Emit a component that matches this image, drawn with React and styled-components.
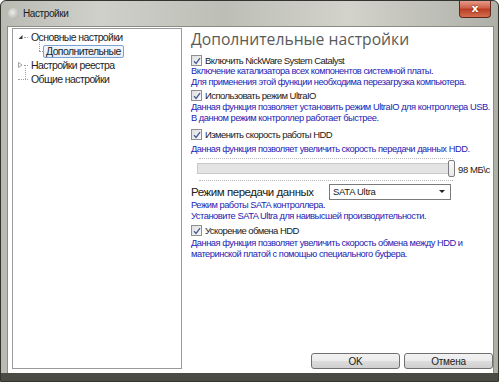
import styled, { createGlobalStyle } from "styled-components";

const GlobalStyle = createGlobalStyle`
  html, body {
    margin: 0;
    padding: 0;
    background: #fff;
  }
  #root {
    width: 500px;
    height: 383px;
  }
`;

const Window = styled.div`
  width: 499px;
  height: 382px;
  display: flex;
  flex-direction: column;
  box-sizing: border-box;
  border: 1px solid #34342f;
  border-radius: 6px 6px 0 0;
  background: linear-gradient(90deg, #b9bbb3 0%, #cfd0ca 20%, #bdbfb6 45%, #d3d2cb 70%, #aeb0a8 100%);
  overflow: hidden;
  font-family: "Liberation Sans", Arial, sans-serif;
`;

const TitleBar = styled.div`
  height: 25px;
  flex: none;
  display: flex;
  align-items: center;
  padding: 0 6px 0 7px;
  position: relative;
`;

const TitleIcon = styled.div`
  width: 11px;
  height: 11px;
  border-radius: 50%;
  background: radial-gradient(circle at 40% 40%, #ecece8, #a3a49e);
  margin-right: 4px;
`;

const Title = styled.span`
  font-size: 10px;
  letter-spacing: -0.4px;
  color: #1c1c1c;
`;

const CloseButton = styled.div`
  position: absolute;
  right: 7px;
  top: -1px;
  width: 30px;
  height: 17px;
  border: 1px solid #5e2a20;
  border-top: none;
  border-radius: 0 0 4px 4px;
  background: linear-gradient(#e8a493 0%, #d0634c 45%, #b93e23 55%, #d56e4e 100%);
  display: flex;
  align-items: center;
  justify-content: center;
  color: #fff;
  font: bold 11px "DejaVu Sans", sans-serif;
  text-shadow: 0 0 2px #5a1a0a;
`;

const Frame = styled.div`
  flex: 1;
  display: flex;
  padding: 0 4px 0 6px;
  min-height: 0;
  border-bottom: 8px solid #4a4b45;
`;

const Client = styled.div`
  flex: 1;
  background: #fff;
  border: 1px solid #8b8c86;
  border-bottom: none;
  display: grid;
  grid-template-columns: 170px 1fr;
  gap: 8px;
  padding: 1px 0 4px 4px;
`;

const Tree = styled.div`
  border: 1px solid #9a9a9a;
  padding: 1px 0 0 5px;
  font-size: 10.5px;
  letter-spacing: -0.6px;
  color: #1e1e1e;
`;

const TreeRow = styled.div`
  display: flex;
  align-items: center;
  height: 14px;
  padding-left: ${(p) => p.$level * 21}px;
  position: relative;
  white-space: nowrap;
`;

const Expander = styled.span`
  width: 6px;
  display: inline-flex;
  align-items: center;
`;

const Dots = styled.span`
  width: ${(p) => p.$w}px;
  border-top: 1px dotted #a0a0a0;
`;

const VDots = styled.span`
  position: absolute;
  left: ${(p) => p.$left}px;
  top: ${(p) => p.$top}px;
  height: ${(p) => p.$h}px;
  border-left: 1px dotted #a0a0a0;
`;

const TreeLabel = styled.span`
  padding: 0 2px;
  border: 1px solid ${(p) => (p.$selected ? "#7da2ce" : "transparent")};
  border-radius: 2px;
  background: ${(p) => (p.$selected ? "linear-gradient(#f2f7fd, #e4eefa)" : "none")};
  line-height: 11px;
`;

const Panel = styled.div`
  display: flex;
  flex-direction: column;
  padding: 0 0 0 1px;
  min-width: 0;
  white-space: nowrap;
`;

const Heading = styled.div`
  font-family: "Open Sans", "Liberation Sans", sans-serif;
  font-size: 15.7px;
  color: #5a5a5a;
  height: 27px;
  line-height: 22px;
`;

const Section = styled.div`
  margin-bottom: ${(p) => p.$gap || 0}px;
`;

const CheckRow = styled.label`
  display: flex;
  align-items: center;
  height: 11px;
  font-size: 9.5px;
  letter-spacing: -0.55px;
  color: #202020;
  margin-bottom: ${(p) => p.$gap || 0}px;
`;

const Box = styled.span`
  width: 9px;
  height: 9px;
  border: 1px solid #8f8f8f;
  background: linear-gradient(135deg, #dedede, #fafafa);
  margin-right: 3px;
  display: inline-flex;
  align-items: center;
  justify-content: center;
`;

const Note = styled.div`
  font-size: 9.3px;
  letter-spacing: -0.47px;
  line-height: 11px;
  color: #2323b4;
`;

const SliderWrap = styled.div`
  display: flex;
  align-items: center;
  padding: 0 0 0 6px;
  height: 28px;
`;

const SliderTrack = styled.div`
  position: relative;
  width: 258px;
  height: 23px;
  &::before,
  &::after {
    content: "";
    position: absolute;
    left: 2px;
    right: 2px;
    border-top: 1px dotted #b8b8b8;
  }
  &::before { top: 0; }
  &::after { bottom: 0; }
`;

const Rail = styled.div`
  position: absolute;
  left: 0;
  right: 2px;
  top: 5px;
  height: 9px;
  border: 1px solid #c9c9c9;
  background: #e4e4e4;
`;

const Thumb = styled.div`
  position: absolute;
  right: 0;
  top: 2px;
  width: 5px;
  height: 15px;
  border: 1px solid #7c7c7c;
  border-radius: 2px;
  background: linear-gradient(#fdfdfd, #e6e6e6);
`;

const SliderValue = styled.span`
  margin-left: 3px;
  font-size: 9.5px;
  letter-spacing: -0.4px;
  color: #202020;
`;

const ModeRow = styled.div`
  display: flex;
  align-items: center;
  height: 17px;
`;

const ModeLabel = styled.span`
  width: 138px;
  font-size: 11.5px;
  letter-spacing: -0.45px;
  color: #202020;
`;

const Select = styled.div`
  width: 112px;
  height: 14px;
  border: 1px solid #7a7a7a;
  display: flex;
  align-items: center;
  justify-content: space-between;
  padding: 0 5px 0 3px;
  font-size: 9.5px;
  letter-spacing: -0.3px;
  color: #202020;
  background: #fff;
`;

const Caret = styled.span`
  width: 0;
  height: 0;
  border-left: 3px solid transparent;
  border-right: 3px solid transparent;
  border-top: 3px solid #222;
`;

const Spacer = styled.div`
  flex: 1;
`;

const Buttons = styled.div`
  display: flex;
  justify-content: flex-end;
  gap: 4px;
`;

const Button = styled.div`
  width: 87px;
  height: 14px;
  border: 1px solid #707070;
  border-radius: 3px;
  background: linear-gradient(#f2f2f2 0%, #ebebeb 50%, #dddddd 51%, #cfcfcf 100%);
  display: flex;
  align-items: center;
  justify-content: center;
  font-size: 10px;
  letter-spacing: -0.2px;
  color: #202020;
`;

const Check = () => (
  <Box>
    <svg width="8" height="8" viewBox="0 0 8 8">
      <path d="M1 4.2 L3.1 6.4 L7 1.2" fill="none" stroke="#4a5f97" strokeWidth="1.4" />
    </svg>
  </Box>
);

const Triangle = ({ open }) => (
  <svg width="5" height="6" viewBox="0 0 5 6">
    {open ? (
      <path d="M4.5 1 L4.5 5 L0.5 5 Z" fill="#3a3a3a" />
    ) : (
      <path d="M0.5 0.5 L4 3 L0.5 5.5 Z" fill="#fff" stroke="#8a8a8a" strokeWidth="0.8" />
    )}
  </svg>
);

const Option = ({ label, lines, gap, noteGap }) => (
  <Section $gap={gap}>
    <CheckRow $gap={noteGap}>
      <Check />
      {label}
    </CheckRow>
    {lines.map((l) => (
      <Note key={l}>{l}</Note>
    ))}
  </Section>
);

export default function App() {
  return (
    <>
      <GlobalStyle />
      <Window>
        <TitleBar>
          <TitleIcon />
          <Title>Настройки</Title>
          <CloseButton>x</CloseButton>
        </TitleBar>
        <Frame>
          <Client>
            <Tree>
              <TreeRow $level={0}>
                <Expander>
                  <Triangle open />
                </Expander>
                <Dots $w={4} />
                <TreeLabel>Основные настройки</TreeLabel>
              </TreeRow>
              <TreeRow $level={1}>
                <VDots $left={21} $top={-4} $h={11} />
                <Dots $w={4} />
                <TreeLabel $selected>Дополнительные</TreeLabel>
              </TreeRow>
              <TreeRow $level={0}>
                <Expander>
                  <Triangle />
                </Expander>
                <Dots $w={4} />
                <TreeLabel>Настройки реестра</TreeLabel>
              </TreeRow>
              <TreeRow $level={0}>
                <VDots $left={7} $top={-4} $h={11} />
                <Dots $w={10} />
                <TreeLabel>Общие настройки</TreeLabel>
              </TreeRow>
            </Tree>
            <Panel>
              <Heading>Дополнительные настройки</Heading>
              <Option
                label="Включить NickWare System Catalyst"
                lines={[
                  "Включение катализатора всех компонентов системной платы.",
                  "Для применения этой функции необходима перезагрузка компьютера.",
                ]}
                gap={2}
              />
              <Option
                label="Использовать режим UltraIO"
                lines={[
                  "Данная функция позволяет установить режим UltraIO для контроллера USB.",
                  "В данном режим контроллер работает быстрее.",
                ]}
                noteGap={1}
                gap={5}
              />
              <Option
                label="Изменить скорость работы HDD"
                lines={["Данная функция позволяет увеличить скорость передачи данных HDD."]}
                noteGap={4}
              />
              <SliderWrap>
                <SliderTrack>
                  <Rail />
                  <Thumb />
                </SliderTrack>
                <SliderValue>98 МБ\с</SliderValue>
              </SliderWrap>
              <ModeRow>
                <ModeLabel>Режим передачи данных</ModeLabel>
                <Select>
                  SATA Ultra
                  <Caret />
                </Select>
              </ModeRow>
              <Section $gap={3}>
                <Note>Режим работы SATA контроллера.</Note>
                <Note>Установите SATA Ultra для наивысшей производительности.</Note>
              </Section>
              <Option
                label="Ускорение обмена HDD"
                lines={[
                  "Данная функция позволяет увеличить скорость обмена между HDD и",
                  "материнской платой с помощью специального буфера.",
                ]}
                noteGap={2}
              />
              <Spacer />
              <Buttons>
                <Button>OK</Button>
                <Button>Отмена</Button>
              </Buttons>
            </Panel>
          </Client>
        </Frame>
      </Window>
    </>
  );
}
